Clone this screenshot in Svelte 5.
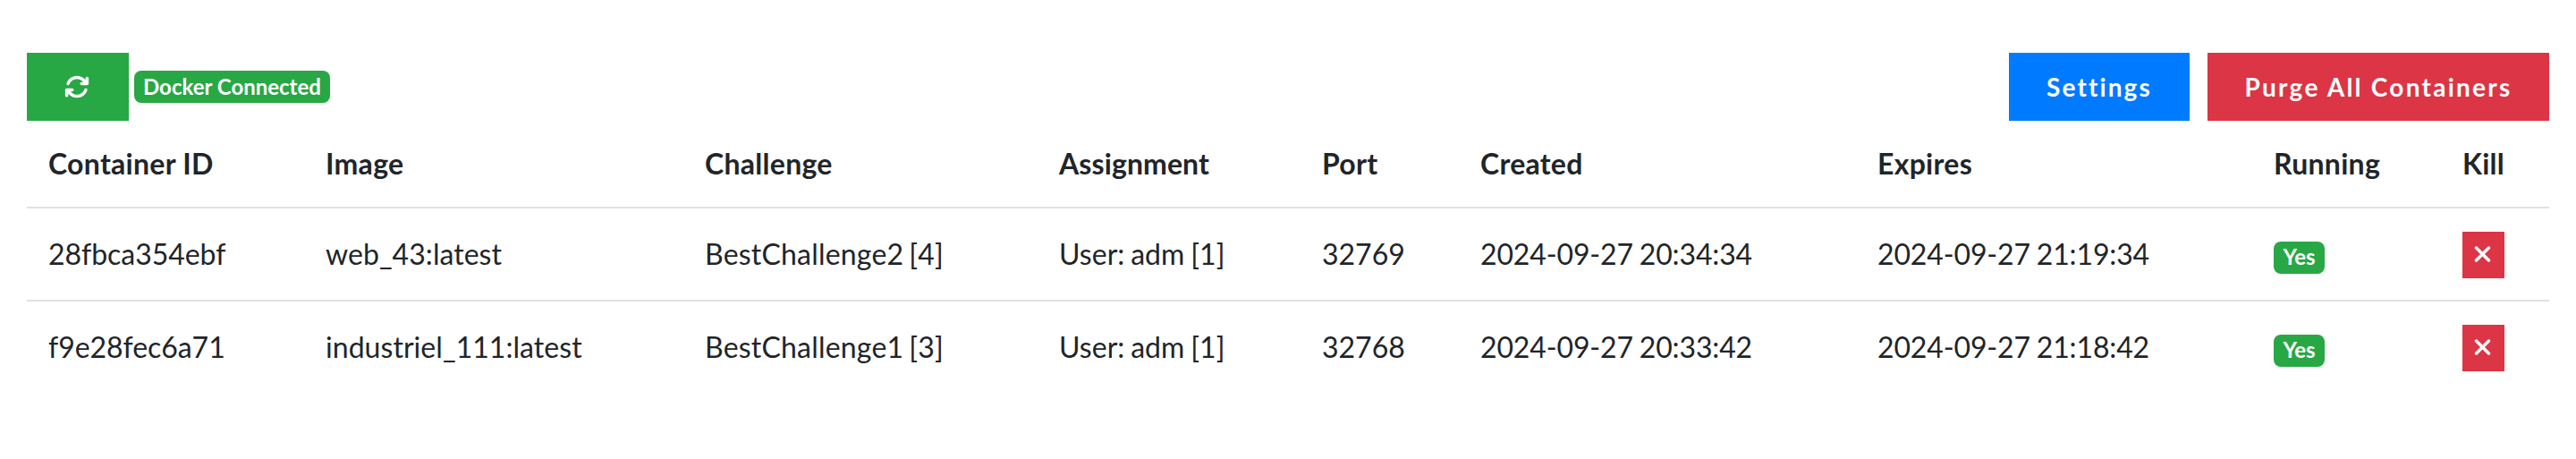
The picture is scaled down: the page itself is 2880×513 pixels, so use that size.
<script>
  const rows = [
    ['28fbca354ebf', 'web_43:latest', 'BestChallenge2 [4]', 'User: adm [1]', '32769', '2024-09-27 20:34:34', '2024-09-27 21:19:34'],
    ['f9e28fec6a71', 'industriel_111:latest', 'BestChallenge1 [3]', 'User: adm [1]', '32768', '2024-09-27 20:33:42', '2024-09-27 21:18:42'],
  ];
  const heads = ['Container ID', 'Image', 'Challenge', 'Assignment', 'Port', 'Created', 'Expires', 'Running', 'Kill'];
  const widths = [310, 424, 396, 294, 177, 444, 443, 211, 121];
</script>

<main>
  <header>
    <button class="btn refresh" aria-label="Refresh">
      <svg viewBox="0 0 512 512"><path d="M105.1 202.6c7.7-21.8 20.2-42.3 37.8-59.8c62.5-62.5 163.8-62.5 226.3 0L386.3 160H352c-17.7 0-32 14.3-32 32s14.3 32 32 32H463.5c0 0 0 0 0 0h.4c17.7 0 32-14.3 32-32V80c0-17.7-14.3-32-32-32s-32 14.3-32 32v35.2L414.4 97.6c-87.5-87.5-229.3-87.5-316.8 0C73.2 122 55.6 150.7 44.8 181.4c-5.9 16.7 2.9 34.9 19.5 40.8s34.9-2.9 40.8-19.5zM39 289.3c-5 1.5-9.8 4.2-13.7 8.2c-4 4-6.7 8.8-8.1 14c-.3 1.2-.6 2.5-.8 3.8c-.3 1.7-.4 3.4-.4 5.1V432c0 17.7 14.3 32 32 32s32-14.3 32-32V396.9l17.6 17.5 0 0c87.5 87.4 229.3 87.4 316.7 0c24.4-24.4 42.1-53.1 52.9-83.7c5.9-16.7-2.9-34.9-19.5-40.8s-34.9 2.9-40.8 19.5c-7.7 21.8-20.2 42.3-37.8 59.8c-62.5 62.5-163.8 62.5-226.3 0l-.1-.1L125.6 352H160c17.7 0 32-14.3 32-32s-14.3-32-32-32H48.4c-1.6 0-3.2 .1-4.8 .3s-3.1 .5-4.6 1z" /></svg>
    </button>
    <span class="badge status">Docker Connected</span>
    <button class="btn settings">Settings</button>
    <button class="btn purge">Purge All Containers</button>
  </header>
  <table>
    <colgroup>
      {#each widths as w}<col style="width: {w}px" />{/each}
    </colgroup>
    <thead>
      <tr>{#each heads as h}<th>{h}</th>{/each}</tr>
    </thead>
    <tbody>
      {#each rows as row}
        <tr>
          {#each row as cell}<td>{cell}</td>{/each}
          <td><span class="badge">Yes</span></td>
          <td><button class="kill" aria-label="Kill"><svg viewBox="0 0 384 512"><path d="M342.6 150.6c12.5-12.5 12.5-32.8 0-45.3s-32.8-12.5-45.3 0L192 210.7 86.6 105.4c-12.5-12.5-32.8-12.5-45.3 0s-12.5 32.8 0 45.3L146.7 256 41.4 361.4c-12.5 12.5-12.5 32.8 0 45.3s32.8 12.5 45.3 0L192 301.3 297.4 406.6c12.5 12.5 32.8 12.5 45.3 0s12.5-32.8 0-45.3L237.3 256 342.6 150.6z" /></svg></button></td>
        </tr>
      {/each}
    </tbody>
  </table>
</main>

<style>
  :global(body) { background: #fff; }
  main { box-sizing: border-box; height: 513px; padding: 59px 30px 0; font-family: Lato, sans-serif; font-size: 32px; line-height: 48px; color: #212529; }
  header { display: flex; height: 76px; align-items: flex-start; }
  button { box-sizing: border-box; border: 0; padding: 0; color: #fff; font-family: inherit; border-radius: 0; }
  .btn { height: 76px; font-size: 28px; font-weight: 700; }
  .refresh { width: 114px; padding-right: 2px; background: #28a745; display: flex; align-items: center; justify-content: center; }
  .refresh svg { width: 28px; height: 28px; fill: #fff; }
  .settings { width: 202px; margin-left: auto; background: #007bff; letter-spacing: 2.1px; }
  .purge { width: 382px; margin-left: 20px; background: #dc3545; letter-spacing: 2.25px; }
  .badge { box-sizing: border-box; display: inline-block; min-width: 57px; padding: 5px 10px 7px; border-radius: 8px; background: #28a745; color: #fff; font-size: 24px; line-height: 24px; font-weight: 700; letter-spacing: 0; white-space: nowrap; text-align: center; }
  .status { margin: 20px 0 0 6px; padding: 6px 10px; }
  table { width: 2820px; table-layout: fixed; border-collapse: separate; border-spacing: 0; }
  th, td { box-sizing: border-box; padding: 0 24px; white-space: nowrap; vertical-align: middle; }
  th { height: 96px; text-align: left; font-weight: 700; letter-spacing: 0.28px; }
  th:nth-child(4) { letter-spacing: 0.1px; }
  td { height: 104px; border-top: 2px solid #dee2e6; }
  td:nth-child(1) { letter-spacing: -0.05px; }
  td:nth-child(2) { letter-spacing: 0.05px; }
  td:nth-child(3) { letter-spacing: 0.2px; word-spacing: -2.5px; }
  td:nth-child(4) { word-spacing: -1.5px; letter-spacing: 0.05px; }
  td:nth-child(6), td:nth-child(7) { letter-spacing: -0.13px; word-spacing: -1.3px; }
  .kill { display: flex; align-items: center; justify-content: center; width: 47px; height: 52px; margin-top: 2px; padding: 0 3px 3px 0; background: #dc3545; }
  .kill svg { width: 21px; height: 28px; fill: #fff; }
</style>
